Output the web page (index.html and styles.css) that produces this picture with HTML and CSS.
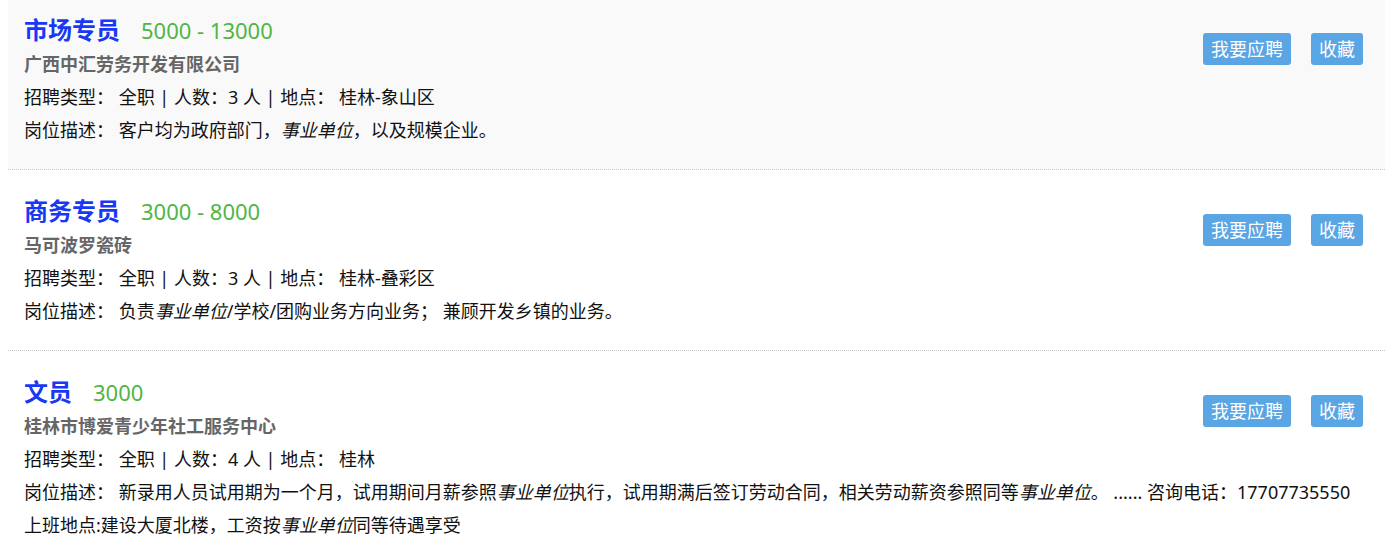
FILE: index.html
```html
<!DOCTYPE html>
<html lang="zh-CN">
<head>
<meta charset="utf-8">
<title>职位列表</title>
<link rel="stylesheet" href="styles.css">
</head>
<body>
<ul class="job-list">
  <li class="job job-active">
    <div class="job-info">
      <div class="job-head"><a class="job-title">市场专员</a><span class="job-salary">5000 - 13000</span></div>
      <div class="job-company">广西中汇劳务开发有限公司</div>
      <div class="job-line">招聘类型： 全职 | 人数：3 人 | 地点： 桂林-象山区</div>
      <div class="job-line">岗位描述： 客户均为政府部门，<em>事业单位</em>，以及规模企业。</div>
    </div>
    <div class="job-actions"><a class="btn">我要应聘</a><a class="btn">收藏</a></div>
  </li>
  <li class="job">
    <div class="job-info">
      <div class="job-head"><a class="job-title">商务专员</a><span class="job-salary">3000 - 8000</span></div>
      <div class="job-company">马可波罗瓷砖</div>
      <div class="job-line">招聘类型： 全职 | 人数：3 人 | 地点： 桂林-叠彩区</div>
      <div class="job-line">岗位描述： 负责<em>事业单位</em>/学校/团购业务方向业务； 兼顾开发乡镇的业务。</div>
    </div>
    <div class="job-actions"><a class="btn">我要应聘</a><a class="btn">收藏</a></div>
  </li>
  <li class="job">
    <div class="job-info">
      <div class="job-head"><a class="job-title">文员</a><span class="job-salary">3000</span></div>
      <div class="job-company">桂林市博爱青少年社工服务中心</div>
      <div class="job-line">招聘类型： 全职 | 人数：4 人 | 地点： 桂林</div>
      <div class="job-line">岗位描述： 新录用人员试用期为一个月，试用期间月薪参照<em>事业单位</em>执行，试用期满后签订劳动合同，相关劳动薪资参照同等<em>事业单位</em>。 ...... 咨询电话：17707735550<br>上班地点:建设大厦北楼，工资按<em>事业单位</em>同等待遇享受</div>
    </div>
    <div class="job-actions"><a class="btn">我要应聘</a><a class="btn">收藏</a></div>
  </li>
</ul>
</body>
</html>
```
FILE: styles.css
```css
html, body {
  margin: 0;
  padding: 0;
  background: #fff;
}
body {
  padding: 0 3px 0 8px;
  font-family: "Noto Sans", "Noto Sans CJK SC", sans-serif;
  color: #111;
  overflow: hidden;
}
.job-list {
  list-style: none;
  margin: -11px 0 0 0;
  padding: 0;
}
.job {
  display: flex;
  align-items: flex-start;
  padding: 23px 22px 22px 16px;
  border-bottom: 1px dotted #c8c8c8;
}
.job-active {
  background: #f9f9f9;
}
.job-info {
  flex: 1;
  min-width: 0;
}
.job-head {
  display: flex;
  align-items: baseline;
  gap: 21px;
  line-height: 36px;
  height: 36px;
}
.job-title {
  font-size: 24px;
  font-weight: bold;
  color: #1838f4;
}
.job-salary {
  font-size: 22px;
  color: #4fb644;
}
.job-company {
  font-size: 18px;
  font-weight: bold;
  color: #666;
  line-height: 33px;
}
.job-line {
  font-size: 18px;
  line-height: 33px;
  white-space: nowrap;
}
.job-line em {
  font-style: italic;
}
.job-actions {
  display: flex;
  flex-shrink: 0;
  gap: 20px;
  margin-top: 21px;
}
.btn {
  display: block;
  background: #5aa5e4;
  color: #fff;
  font-size: 18px;
  line-height: 32px;
  height: 32px;
  padding: 0 8px;
  border-radius: 3px;
}
```
